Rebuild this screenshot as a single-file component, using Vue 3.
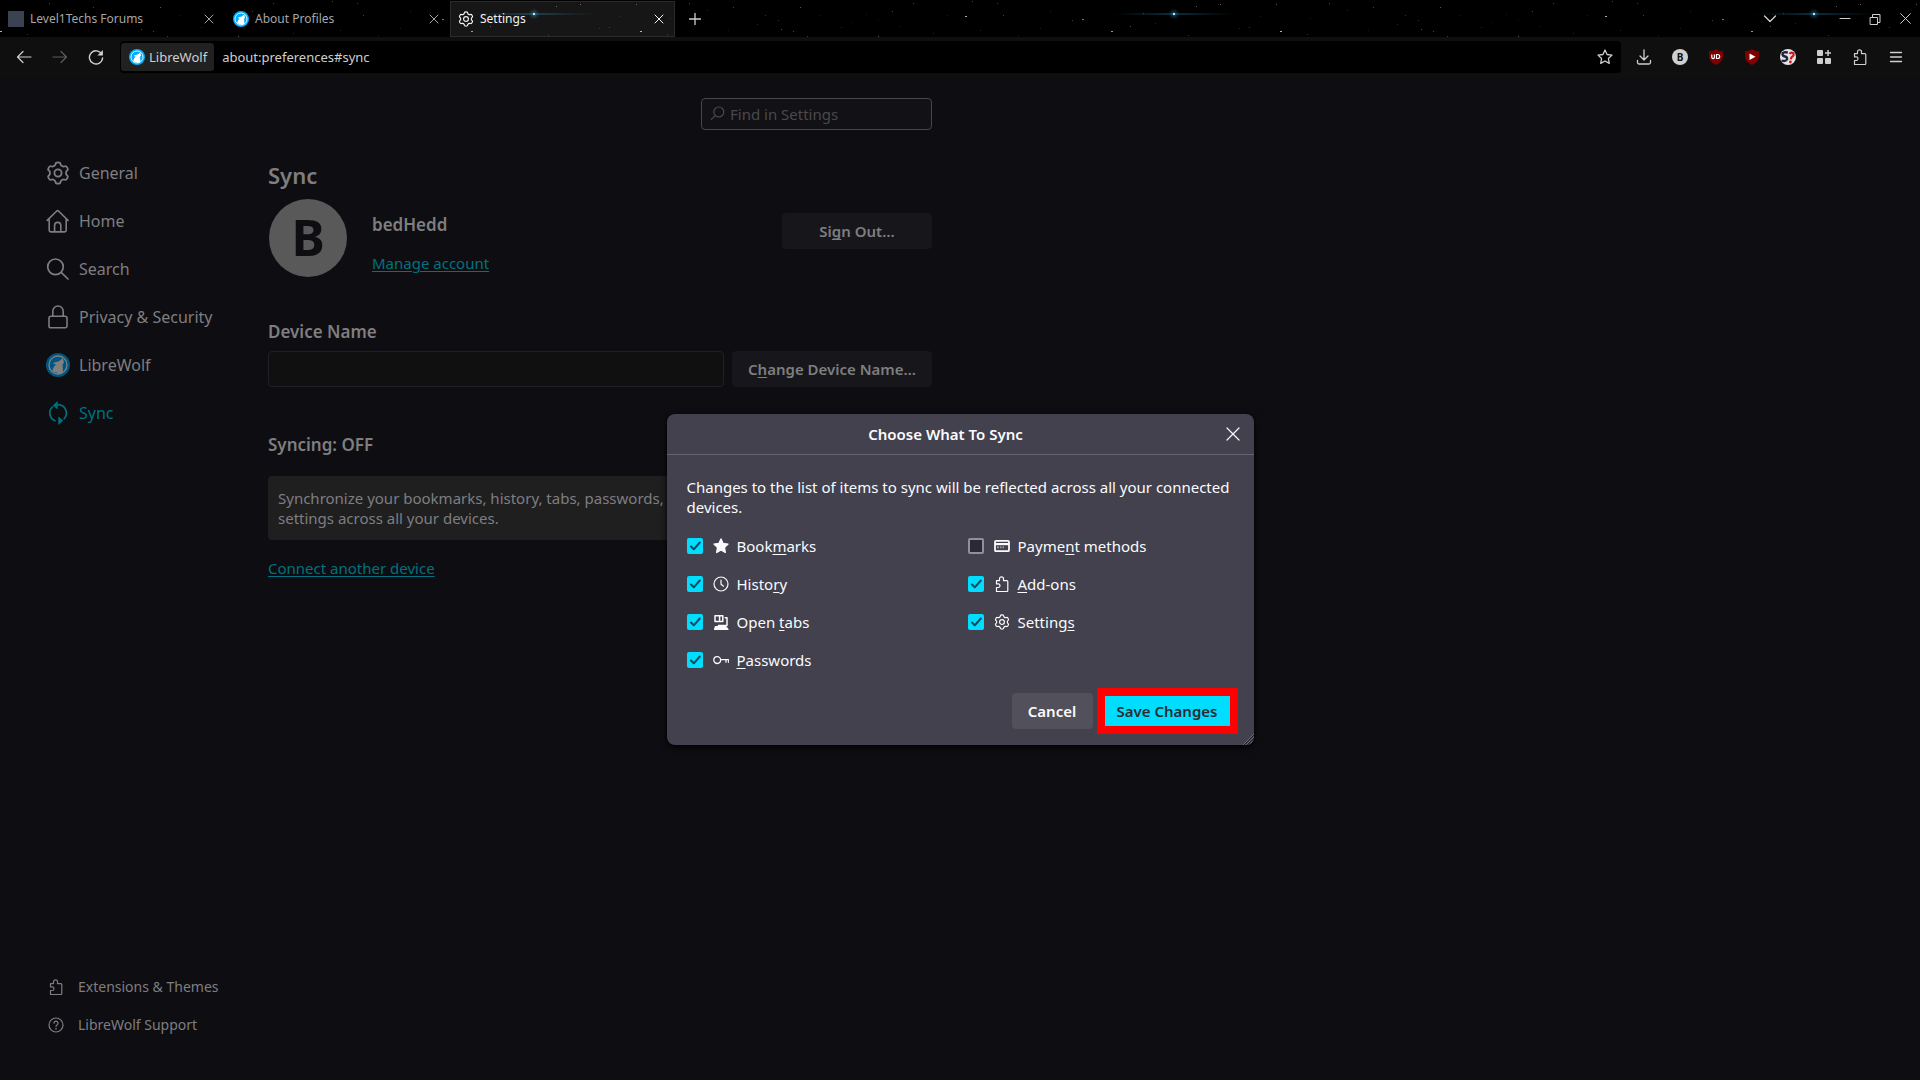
<script setup>
import { ref, h } from 'vue'

const gearPath = (() => {
  const pts = []
  const shape = [[10.9, -12], [10.9, 12], [8.6, 17], [7.9, 30], [8.6, 43]]
  for (let k = 0; k < 6; k++) {
    for (const [r, a] of shape) {
      const t = ((a + k * 60 - 90) * Math.PI) / 180
      pts.push([12 + r * Math.cos(t), 12 + r * Math.sin(t)])
    }
  }
  const mid = (a, b) => [(a[0] + b[0]) / 2, (a[1] + b[1]) / 2]
  const f = (p) => p[0].toFixed(2) + ' ' + p[1].toFixed(2)
  let d = 'M' + f(mid(pts[pts.length - 1], pts[0]))
  pts.forEach((p, i) => {
    d += 'Q' + f(p) + ' ' + f(mid(p, pts[(i + 1) % pts.length]))
  })
  return d + 'Z'
})()

const puzzle =
  'M2.5 4.6h3V2.8a2 2 0 0 1 4 0v1.8h3.3a1 1 0 0 1 1 1v8.9a1 1 0 0 1-1 1H2.5v-4h1.7a1.8 1.8 0 0 0 0-3.6H2.5z'

const line = (d, w = 1) => ({ d, fill: 'none', stroke: 'currentColor', 'stroke-width': w, 'stroke-linecap': 'round', 'stroke-linejoin': 'round' })
const solid = (d, color = 'currentColor') => ({ d, fill: color, 'fill-rule': 'evenodd' })

const icons = {
  gear: { box: 24, paths: [line(gearPath, 1.8), line('M12 8.4a3.6 3.6 0 1 1 0 7.2a3.6 3.6 0 0 1 0-7.2z', 1.8)] },
  home: { box: 24, paths: [line('M1.2 11.4L10.8 2a1.2 1.2 0 0 1 1.7 0L22 11.4M3.2 10v11.3a1.6 1.6 0 0 0 1.6 1.6h13.8a1.6 1.6 0 0 0 1.6-1.6V10M8.6 22.5v-6a3.1 3.1 0 0 1 6.2 0v6', 1.6)] },
  search: { box: 24, paths: [line('M9.5 2a7.8 7.8 0 1 1 0 15.6a7.8 7.8 0 0 1 0-15.6zM15.2 15.4L22 22', 1.7)] },
  lock: { box: 24, paths: [line('M4.8 11.2h14.4a1.8 1.8 0 0 1 1.8 1.8v8a1.8 1.8 0 0 1-1.8 1.8H4.8a1.8 1.8 0 0 1-1.8-1.8v-8a1.8 1.8 0 0 1 1.8-1.8zM6.8 11V6.2a5.2 5.2 0 0 1 10.4 0V11', 1.6)] },
  sync: { box: 24, paths: [line('M6.4 6A8.3 8.3 0 0 0 9 19.7M12.2 3.7A8.3 8.3 0 0 1 18.2 17.600', 1.7), solid('M11.7 0v8.4L6.800 4.500zM12.300 24v-8.400l4.900 4z')] },
  wolf: { box: 24, paths: [solid('M12 0a12 12 0 1 1 0 24a12 12 0 0 1 0-24z', 'var(--logo)'), { d: 'M12 3a9 9 0 1 1 0 18a9 9 0 0 1 0-18z', fill: 'none', stroke: 'var(--wolf)', 'stroke-width': 1.3 }, solid('M7.6 9.8L13 8.2 16.8 5.2 18 9.6 16.6 11.6 17 19.4Q14.5 21 12 21L11.6 19.8 6.4 18.6Q6.8 14 10 11.2L7.6 11z', 'var(--wolf)')] },
  find: { box: 16, paths: [line('M8.800 1a5 5 0 1 1 0 10a5 5 0 0 1 0-10zM5.200 9.600L1.400 13.400', 1.200)] },
  back: { box: 16, paths: [line('M15 8H1.5M7 2.5L1.5 8L7 13.5', 1.2)] },
  forward: { box: 16, paths: [line('M1 8h13.5M9 2.5L14.5 8L9 13.5', 1.2)] },
  reload: { box: 16, paths: [line('M13.8 5.2A6.6 6.6 0 1 0 14.6 9', 1.4), solid('M14.9 1v5.5H9.4z')] },
  close: { box: 16, paths: [line('M4 4l8 8M12 4l-8 8')] },
  closeBig: { box: 16, paths: [line('M2 2l12 12M14 2L2 14', 1.2)] },
  plus: { box: 16, paths: [line('M8 2.5v11M2.5 8h11', 1.3)] },
  chevron: { box: 16, paths: [line('M2.5 5L8 10.5L13.5 5', 1.3)] },
  min: { box: 16, paths: [line('M3 7.5h10')] },
  restore: { box: 16, paths: [line('M3.5 6.5h7v7h-7zM5.5 6V3.5h7.5v8h-2')] },
  starLine: { box: 16, paths: [line('M8 1l2.1 4.5 4.9.6-3.6 3.4.9 4.9L8 12l-4.3 2.4.9-4.9L1 6.1l4.9-.6z', 1.3)] },
  star: { box: 16, paths: [{ ...line('M8 1l2.1 4.5 4.9.6-3.6 3.4.9 4.9L8 12l-4.3 2.4.9-4.9L1 6.1l4.9-.6z', 1.4), fill: 'currentColor' }] },
  download: { box: 16, paths: [line('M8 1v9.5M4 7l4 4 4-4M1.5 11.5v2a1.5 1.5 0 0 0 1.5 1.5h10a1.5 1.5 0 0 0 1.5-1.5v-2', 1.3)] },
  grid: { box: 16, paths: [solid('M2 1h4a1 1 0 0 1 1 1v4a1 1 0 0 1-1 1H2a1 1 0 0 1-1-1V2a1 1 0 0 1 1-1zM2 9h4a1 1 0 0 1 1 1v4a1 1 0 0 1-1 1H2a1 1 0 0 1-1-1v-4a1 1 0 0 1 1-1zM10 9h4a1 1 0 0 1 1 1v4a1 1 0 0 1-1 1h-4a1 1 0 0 1-1-1v-4a1 1 0 0 1 1-1zM11.3 1h1.5v2.2H15v1.5h-2.2V7h-1.5V4.7H9V3.2h2.3z')] },
  puzzle: { box: 16, paths: [line(puzzle, 1.2)] },
  menu: { box: 16, paths: [line('M2.5 3.5h11M2.5 8h11M2.5 12.5h11', 1.3)] },
  clock: { box: 16, paths: [line('M8 1a7 7 0 1 1 0 14a7 7 0 0 1 0-14zM8 4v4.2l2.5 2', 1.2)] },
  tabs: { box: 16, paths: [line('M2 1.800h7.800v5.600H2zM6.600 2v5M12.200 3.800h1.800v7.700H5.500', 1.500), solid('M2 12h11l2.500 3v1H1v-1z'), line('M6 13.700h5')] },
  key: { box: 16, paths: [line('M4.2 4.700a3.400 3.400 0 1 1 0 6.800a3.400 3.400 0 0 1 0-6.800zM7.800 7.600h7.700v2.600M13 7.800v2.400', 1.300)] },
  card: { box: 16, paths: [line('M2 2.800h12a1 1 0 0 1 1 1v8.400a1 1 0 0 1-1 1H2a1 1 0 0 1-1-1V3.800a1 1 0 0 1 1-1z', 1.800), solid('M1 5h14v2.200H1z'), solid('M3 8.500h2v1.800H3zM6 8.500h1.500v1.800H6zM8.500 8.500h1.500v1.800H8.500z', '#a3a2aa')] },
  help: { box: 16, paths: [line('M8 1a7 7 0 1 1 0 14a7 7 0 0 1 0-14zM6 6.200a2 2 0 1 1 3 1.700c-.7.4-1 .8-1 1.500', 1.200), solid('M7.300 11h1.400v1.400H7.300z')] },
}

const Icon = (props) =>
  h(
    'svg',
    { viewBox: `0 0 ${icons[props.name].box} ${icons[props.name].box}`, width: props.size, height: props.size, 'aria-hidden': 'true' },
    icons[props.name].paths.map((p) => h('path', p)),
  )
Icon.props = ['name', 'size']

const nav = [
  { label: 'General', icon: 'gear' },
  { label: 'Home', icon: 'home' },
  { label: 'Search', icon: 'search' },
  { label: 'Privacy & Security', icon: 'lock' },
  { label: 'LibreWolf', icon: 'wolf' },
  { label: 'Sync', icon: 'sync', active: true },
]

const engines = ref([
  { id: 'bookmarks', icon: 'star', text: ['Book', 'm', 'arks'], on: true },
  { id: 'history', icon: 'clock', text: ['Histo', 'r', 'y'], on: true },
  { id: 'tabs', icon: 'tabs', text: ['Open ', 't', 'abs'], on: true },
  { id: 'passwords', icon: 'key', text: ['', 'P', 'asswords'], on: true },
  { id: 'payments', icon: 'card', text: ['Payme', 'n', 't methods'], on: false },
  { id: 'addons', icon: 'puzzle', text: ['', 'A', 'dd-ons'], on: true },
  { id: 'settings', icon: 'gear', text: ['Setting', 's', ''], on: true },
])

const find = ref('')
const deviceName = ref('')

const stars = [
  [325, 16, 0.7], [442, 19, 0.5], [471, 31, 0.6], [0, 31, 0.7], [580, 4, 0.4], [636, 4, 0.35], [556, 6, 0.35],
  [490, 26, 0.3], [432, 20, 0.25], [49, 3, 0.3], [93, 7, 0.25], [67, 10, 0.15], [160, 7, 0.35], [125, 15, 0.2],
  [138, 20, 0.2], [117, 24, 0.15], [141, 29, 0.3], [153, 31, 0.25], [167, 36, 0.25], [238, 36, 0.35], [273, 3, 0.25],
  [252, 11, 0.25], [238, 20, 0.1], [226, 14, 0.1], [307, 15, 0.12], [293, 33, 0.15], [357, 3, 0.25], [363, 15, 0.25],
  [332, 1, 0.25], [27, 34, 0.2], [609, 27, 0.2], [515, 23, 0.15], [548, 35, 0.2], [599, 28, 0.15], [503, 13, 0.3],
  [201, 27, 0.15], [378, 35, 0.1], [400, 28, 0.12], [180, 15, 0.1], [88, 30, 0.1], [30, 18, 0.1], [340, 30, 0.15],
  [410, 11, 0.12], [212, 22, 0.12], [260, 26, 0.1], [620, 16, 0.12],
]
</script>

<template>
  <div class="browser">
    <header class="chrome">
      <svg class="sky" aria-hidden="true">
        <defs>
          <linearGradient id="flare">
            <stop offset="0" stop-color="#0f3a4d" stop-opacity="0" />
            <stop offset="0.5" stop-color="#0f4358" stop-opacity="0.7" />
            <stop offset="1" stop-color="#0f3a4d" stop-opacity="0" />
          </linearGradient>
          <radialGradient id="glow">
            <stop offset="0" stop-color="#2a7d9c" stop-opacity="0.7" />
            <stop offset="1" stop-color="#0f3a4d" stop-opacity="0" />
          </radialGradient>
          <pattern id="stars" width="640" height="37" patternUnits="userSpaceOnUse">
            <rect v-for="(s, i) in stars" :key="i" :x="s[0]" :y="s[1]" :width="s[2] > 0.45 ? 2 : 1" height="1" fill="#fff" :opacity="s[2]" />
            <rect x="474" y="13" width="120" height="2" fill="url(#flare)" />
            <circle cx="534" cy="14" r="6" fill="url(#glow)" />
            <rect x="533" y="13" width="2" height="2" fill="#b5e8f7" />
          </pattern>
        </defs>
        <rect width="100%" height="37" fill="url(#stars)" />
      </svg>

      <div class="tabstrip">
        <div class="tab">
          <span class="blank"></span>
          <span class="title">Level1Techs Forums</span>
          <button class="plain" aria-label="Close tab"><Icon name="close" size="16" /></button>
        </div>
        <div class="tab">
          <Icon name="wolf" size="16" />
          <span class="title">About Profiles</span>
          <button class="plain" aria-label="Close tab"><Icon name="close" size="16" /></button>
        </div>
        <div class="tab current">
          <Icon name="gear" size="16" />
          <span class="title">Settings</span>
          <button class="plain" aria-label="Close tab"><Icon name="close" size="16" /></button>
        </div>
        <button class="plain new" aria-label="New tab"><Icon name="plus" size="16" /></button>
        <div class="window">
          <button class="plain list" aria-label="List all tabs"><Icon name="chevron" size="16" /></button>
          <button class="plain" aria-label="Minimize"><Icon name="min" size="16" /></button>
          <button class="plain" aria-label="Restore"><Icon name="restore" size="16" /></button>
          <button class="plain" aria-label="Close"><Icon name="closeBig" size="13" /></button>
        </div>
      </div>

      <div class="toolbar">
        <div class="tools left">
          <button class="plain" aria-label="Back"><Icon name="back" size="16" /></button>
          <button class="plain off" aria-label="Forward" disabled><Icon name="forward" size="16" /></button>
          <button class="plain" aria-label="Reload"><Icon name="reload" size="16" /></button>
        </div>
        <div class="urlbar">
          <button class="identity"><Icon name="wolf" size="16" />LibreWolf</button>
          <input class="url" aria-label="Address" value="about:preferences#sync" />
          <button class="plain" aria-label="Bookmark"><Icon name="starLine" size="16" /></button>
        </div>
        <div class="tools right">
          <button class="plain" aria-label="Downloads"><Icon name="download" size="16" /></button>
          <button class="plain" aria-label="Account"><span class="mini">B</span></button>
          <button class="plain" aria-label="Content blocker">
            <svg width="16" height="16" viewBox="0 0 16 16" aria-hidden="true">
              <path d="M8 0Q10 2 15 2V7Q15 13 8 16Q1 13 1 7V2Q6 2 8 0Z" fill="#800000" />
              <path d="M3.8 5.5v2.8a1.3 1.3 0 0 0 2.6 0V5.5M8.5 5.5h1.200a2 2 0 0 1 0 4H8.500z" fill="none" stroke="#fff" stroke-width="1.2" />
            </svg>
          </button>
          <button class="plain" aria-label="Segment skipper">
            <svg width="16" height="16" viewBox="0 0 16 16" aria-hidden="true">
              <path d="M8 0Q10 2 15 2V7Q15 13 8 16Q1 13 1 7V2Q6 2 8 0Z" fill="#800000" />
              <path d="M5.5 4.5L11.5 7.7L5.5 11z" fill="#fff" />
            </svg>
          </button>
          <button class="plain" aria-label="Site search">
            <svg width="16" height="16" viewBox="0 0 16 16" aria-hidden="true">
              <circle cx="8" cy="8" r="8" fill="#e4e4e6" />
              <path d="M7.8 3.5Q3 2.5 2.5 5Q2.5 7 5 7.5T7 10.5Q5.5 13 1.5 11.5" fill="none" stroke="#1d2340" stroke-width="2.4" />
              <path d="M9.5 4.8Q11 2.8 13 4Q14.6 6 12.2 7.6Q10.9 8.7 10.8 10.4" fill="none" stroke="#d4161c" stroke-width="2.2" />
              <circle cx="10.4" cy="13" r="1.4" fill="#d4161c" />
            </svg>
          </button>
          <button class="plain" aria-label="Add-on bar"><Icon name="grid" size="16" /></button>
          <button class="plain" aria-label="Extensions"><Icon name="puzzle" size="16" /></button>
          <button class="plain" aria-label="Menu"><Icon name="menu" size="16" /></button>
        </div>
      </div>
    </header>

    <div class="page">
      <aside class="side">
        <nav class="categories">
          <a v-for="n in nav" :key="n.label" href="#" :class="{ active: n.active }"><Icon :name="n.icon" size="24" />{{ n.label }}</a>
        </nav>
        <nav class="extra">
          <a href="#"><Icon name="puzzle" size="16" />Extensions &amp; Themes</a>
          <a href="#"><Icon name="help" size="16" />LibreWolf Support</a>
        </nav>
      </aside>

      <main class="pane">
        <div class="find">
          <Icon name="find" size="16" />
          <input v-model="find" type="text" placeholder="Find in Settings" aria-label="Find in Settings" />
        </div>
        <h1>Sync</h1>
        <section class="account">
          <div class="avatar">B</div>
          <div class="who">
            <h2>bedHedd</h2>
            <a href="#">Manage account</a>
          </div>
          <button class="btn signout">Si<span class="key">g</span>n Out…</button>
        </section>
        <h2><label for="device">Device Name</label></h2>
        <div class="device">
          <input id="device" v-model="deviceName" type="text" />
          <button class="btn">C<span class="key">h</span>ange Device Name…</button>
        </div>
        <h2>Syncing: OFF</h2>
        <p class="info">Synchronize your bookmarks, history, tabs, passwords, settings across all your devices.</p>
        <a href="#">Connect another device</a>
      </main>

      <div class="overlay">
        <section class="dialog" role="dialog" aria-labelledby="dialog-title">
          <header class="head">
            <h3 id="dialog-title">Choose What To Sync</h3>
            <button class="plain" aria-label="Close dialog"><Icon name="closeBig" size="16" /></button>
          </header>
          <p>Changes to the list of items to sync will be reflected across all your connected devices.</p>
          <div class="engines">
            <label v-for="e in engines" :key="e.id">
              <input v-model="e.on" type="checkbox" />
              <Icon :name="e.icon" size="16" />
              <span>{{ e.text[0] }}<span class="key">{{ e.text[1] }}</span>{{ e.text[2] }}</span>
            </label>
          </div>
          <footer>
            <button class="cancel">Cancel</button>
            <button class="save">Save Changes</button>
          </footer>
          <svg class="grip" width="12" height="12" viewBox="0 0 12 12" aria-hidden="true">
            <path d="M1 12L12 1M4 12L12 4M7 12L12 7M10 12L12 10" stroke="#6d6c78" fill="none" />
            <path d="M2 12L12 2M5 12L12 5M8 12L12 8" stroke="#1c1b22" fill="none" />
          </svg>
        </section>
      </div>
    </div>
  </div>
</template>

<style>
body {
  background: #0e0d11;
}
</style>

<style scoped>
.browser {
  --logo: #00acff;
  --wolf: #ffffff;
  display: flex;
  flex-direction: column;
  min-height: 100vh;
  background: #0e0d11;
  color: #7e7e80;
  font: 15px/20px "Noto Sans", sans-serif;
}
button,
input {
  font: inherit;
  color: inherit;
  margin: 0;
}
input {
  min-width: 0;
  box-sizing: border-box;
}
svg {
  display: block;
  flex: none;
}
h1,
h2,
h3,
p {
  margin: 0;
}
.plain {
  display: flex;
  align-items: center;
  justify-content: center;
  flex: none;
  padding: 0;
  border: 0;
  background: none;
}
.key {
  text-decoration: underline;
  text-decoration-thickness: 1px;
  text-underline-offset: 2px;
  text-decoration-skip-ink: none;
}

.chrome {
  position: relative;
  background: #000;
  color: #cfcfcf;
  font-size: 12px;
}
.sky {
  position: absolute;
  inset: 0;
  width: 100%;
  height: 37px;
}
.tabstrip {
  position: relative;
  display: flex;
  height: 37px;
}
.tab {
  display: flex;
  align-items: center;
  box-sizing: border-box;
  width: 225px;
  height: 36px;
  margin-top: 1px;
  padding: 0 8px;
  gap: 6px;
  color: #a6a6a6;
}
.tab.current {
  padding: 0 7px;
  border: 1px solid #2b2b2b;
  background: rgba(255, 255, 255, 0.085);
  color: #f2f2f2;
}
.title {
  flex: 1;
}
.blank {
  width: 16px;
  height: 16px;
  background: #3b4252;
}
.new {
  width: 40px;
}
.window {
  display: flex;
  margin-left: auto;
}
.window .plain {
  width: 30px;
}
.window .list {
  margin-right: 45px;
}
.toolbar {
  display: flex;
  align-items: center;
  position: relative;
  box-sizing: border-box;
  height: 41px;
  padding-bottom: 1px;
  background: #0f0f0f;
}
.tools {
  display: flex;
}
.tools .plain {
  width: 36px;
  height: 32px;
}
.left {
  padding: 0 6px;
}
.right {
  padding: 0 6px 0 5px;
}
.off {
  opacity: 0.4;
}
.urlbar {
  display: flex;
  flex: 1;
  align-items: center;
  height: 32px;
  box-sizing: border-box;
  padding: 0 8px 0 1px;
  border-radius: 4px;
  background: #000;
  font-size: 13px;
}
.identity {
  display: flex;
  align-items: center;
  gap: 4px;
  height: 28px;
  padding: 0 7px 0 8px;
  border: 0;
  border-radius: 3px;
  background: #212121;
}
.url {
  flex: 1;
  padding: 0 8px;
  border: 0;
  background: none;
}
.mini {
  width: 16px;
  height: 16px;
  border-radius: 50%;
  background: #cfcfcf;
  color: #111;
  font-size: 10px;
  font-weight: 700;
  line-height: 16px;
}

.page {
  position: relative;
  display: flex;
  flex: 1;
}
.side {
  display: flex;
  flex-direction: column;
  justify-content: space-between;
  box-sizing: border-box;
  width: 268px;
  padding: 71px 0 36px 46px;
}
.side a {
  display: flex;
  align-items: center;
  color: inherit;
  text-decoration: none;
}
.categories {
  --logo: #005680;
  --wolf: #808080;
  font-size: 16px;
}
.categories a {
  height: 48px;
  gap: 9px;
}
.categories a.active {
  color: #00727f;
}
.extra {
  padding-left: 2px;
  font-size: 14px;
}
.extra a {
  height: 38px;
  gap: 14px;
}
.pane {
  flex: 1;
  max-width: 664px;
}
.pane a {
  color: #00727f;
  text-underline-offset: 2px;
}
.find {
  display: flex;
  align-items: center;
  box-sizing: border-box;
  width: 231px;
  height: 32px;
  margin: 20px 0 31px auto;
  padding: 0 8px;
  gap: 4px;
  border: 1px solid #47474a;
  border-radius: 4px;
  background: #121115;
  color: #4a4a4c;
}
.find input {
  flex: 1;
  padding: 0;
  border: 0;
  background: none;
}
.find input::placeholder {
  color: #49494b;
}
h1 {
  font-size: 22px;
  font-weight: 600;
  line-height: 28px;
}
h2 {
  font-size: 17px;
  font-weight: 600;
  line-height: 24px;
}
.account {
  display: flex;
  align-items: center;
  height: 80px;
  margin: 9px 0 42px;
}
.avatar {
  width: 78px;
  height: 78px;
  margin: 0 25px 0 1px;
  border-radius: 50%;
  background: #595959;
  color: #0e0d11;
  font-size: 50px;
  font-weight: 700;
  line-height: 76px;
  text-align: center;
}
.who {
  display: flex;
  flex: 1;
  flex-direction: column;
  align-items: flex-start;
  gap: 16px;
  padding-top: 10px;
}
.btn {
  height: 36px;
  padding: 0 16px;
  border: 0;
  border-radius: 4px;
  background: #17161a;
  font-weight: 600;
}
.signout {
  width: 150px;
  align-self: flex-start;
  margin-top: 15px;
}
.device {
  display: flex;
  gap: 8px;
  margin: 7px 0 46px;
}
.device input {
  flex: 1;
  height: 36px;
  border: 1px solid #212024;
  border-radius: 4px;
  background: #101011;
}
.device .btn {
  width: 200px;
}
.info {
  margin: 19px 0 18px;
  padding: 12px 260px 12px 10px;
  border-radius: 4px;
  background: #1f1f20;
}

.overlay {
  position: absolute;
  inset: 0;
  display: flex;
  align-items: center;
  justify-content: center;
}
.dialog {
  position: relative;
  width: 587px;
  border-radius: 8px;
  background: #42414d;
  box-shadow: 0 2px 6px #000;
  color: #fbfbfe;
  overflow: hidden;
}
.head {
  display: flex;
  align-items: center;
  height: 40px;
  padding-right: 13px;
  border-bottom: 1px solid #65646f;
}
.head h3 {
  flex: 1;
  font-size: 15px;
  font-weight: 600;
  text-align: center;
}
.dialog p {
  margin: 22px 20px 10px;
}
.engines {
  display: grid;
  grid-template-rows: repeat(4, 38px);
  grid-auto-flow: column;
  grid-auto-columns: 281px;
  padding-left: 20px;
}
.engines label {
  display: flex;
  align-items: center;
}
.engines input {
  appearance: none;
  width: 16px;
  height: 16px;
  margin-right: 10px;
  border: 2px solid #8f8f9d;
  border-radius: 2px;
  background: #2b2a33;
}
.engines input:checked {
  border: 0;
  background: #00ddff url("data:image/svg+xml,%3Csvg xmlns='http://www.w3.org/2000/svg' viewBox='0 0 16 16'%3E%3Cpath d='M4 8.5L6.8 11.3L12.8 4.5' fill='none' stroke='%230d4a5c' stroke-width='2' stroke-linecap='round' stroke-linejoin='round'/%3E%3C/svg%3E");
}
.engines svg {
  margin-right: 8px;
}
footer {
  display: flex;
  align-items: center;
  justify-content: flex-end;
  gap: 4px;
  padding: 9px 16px 11px;
}
footer button {
  font-weight: 600;
}
.cancel {
  width: 81px;
  height: 36px;
  padding: 0;
  border: 0;
  border-radius: 4px;
  background: #51505b;
}
.save {
  width: 141px;
  height: 46px;
  padding: 0;
  border: 8px solid #f00;
  background: #00ddff;
  color: #2b2a33;
}
.grip {
  position: absolute;
  right: 0;
  bottom: 0;
}
</style>
